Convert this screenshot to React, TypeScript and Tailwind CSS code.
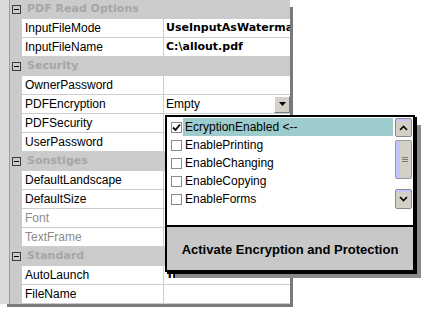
import React from 'react';

type Row =
  | { group: string }
  | { name: string; value?: string; bold?: boolean; dim?: boolean; combo?: boolean };

const rows: Row[] = [
  { group: 'PDF Read Options' },
  { name: 'InputFileMode', value: 'UseInputAsWatermark', bold: true },
  { name: 'InputFileName', value: 'C:\\allout.pdf', bold: true },
  { group: 'Security' },
  { name: 'OwnerPassword' },
  { name: 'PDFEncryption', value: 'Empty', combo: true },
  { name: 'PDFSecurity' },
  { name: 'UserPassword' },
  { group: 'Sonstiges' },
  { name: 'DefaultLandscape' },
  { name: 'DefaultSize' },
  { name: 'Font', dim: true },
  { name: 'TextFrame', dim: true },
  { group: 'Standard' },
  { name: 'AutoLaunch', value: 'True', bold: true },
  { name: 'FileName' },
];

const options = ['EcryptionEnabled <--', 'EnablePrinting', 'EnableChanging', 'EnableCopying', 'EnableForms'];

// wide bold face, close to the old Tahoma Bold of the original
const boldFont = "font-['DejaVu_Sans',sans-serif] font-bold text-[11px]";

const Minus = () => (
  <div className="w-[9px] h-[9px] border border-[#3c3c3c] flex items-center justify-center">
    <div className="w-[5px] h-px bg-black" />
  </div>
);

const ComboButton = () => (
  <div className="shrink-0 w-[16px] h-[17px] bg-[#d4d0c8] border-t border-l border-white border-r border-b border-r-[#7a7a7a] border-b-[#7a7a7a] flex items-center justify-center">
    <svg width="7" height="4" viewBox="0 0 7 4">
      <path d="M0 0h7L3.5 4z" fill="#000" />
    </svg>
  </div>
);

const ScrollButton = ({ up }: { up?: boolean }) => (
  <div className="h-full w-full rounded-[2px] border border-[#8a8a8a] bg-[#d4d0c8] shadow-[inset_0_2px_0_#c6c6ff] flex items-center justify-center">
    <svg width="9" height="6" viewBox="0 0 9 6">
      <path d={up ? 'M1 5l3.5-3.5L8 5' : 'M1 1l3.5 3.5L8 1'} stroke="#000" strokeWidth="1.6" fill="none" />
    </svg>
  </div>
);

const Grid = () => (
  <div className="flex w-[290px] h-[304px] bg-[#cbcbcb] shadow-[5px_5px_0_-2px_#7a7a7a]">
    <div className="shrink-0 w-[9px] bg-[#d9d9d9]" />
    <div className="shrink-0 w-px bg-[#9c9c9c]" />
    <div className="flex-1 min-w-0 flex flex-col">
      {rows.map((r, i) =>
        'group' in r ? (
          <div key={i} className="h-[19px] flex items-center bg-[#cbcbcb]">
            <div className="shrink-0 w-[12px] pl-[2px]">
              <Minus />
            </div>
            <span className={`pl-[5px] text-[#a6a6a6] ${boldFont}`}>{r.group}</span>
          </div>
        ) : (
          <div key={i} className="h-[19px] flex">
            <div className="shrink-0 w-[12px] bg-[#cbcbcb]" />
            <div
              className={`shrink-0 w-[141px] bg-white border-b border-[#cdcdcd] pl-[3px] leading-[18px] whitespace-nowrap ${
                r.dim ? 'text-[#8c8c8c]' : 'text-black'
              }`}
            >
              {r.name}
            </div>
            <div className="shrink-0 w-px bg-[#cdcdcd]" />
            <div className="flex-1 min-w-0 flex items-center bg-white border-b border-[#cdcdcd] pl-[2px] overflow-hidden whitespace-nowrap">
              <span className={`flex-1 min-w-0 leading-[18px] overflow-hidden ${r.bold ? boldFont : ''}`}>{r.value}</span>
              {r.combo && <ComboButton />}
            </div>
          </div>
        )
      )}
    </div>
  </div>
);

const Popup = () => (
  <div className="absolute left-[165px] top-[115px] w-[250px] border-2 border-black bg-white flex flex-col shadow-[2px_2px_0_0_#000,8px_8px_0_-2px_#8a8a8a]">
    <div className="h-[108px] flex">
      <div className="w-[226px] pt-px flex flex-col">
        {options.map((o, i) => (
          <div key={o} className="h-[18px] flex items-center">
            <div className="ml-[4px] w-[11px] h-[11px] border border-[#8a8a8a] bg-white flex items-center justify-center">
              {i === 0 && (
                <svg width="9" height="9" viewBox="0 0 9 9">
                  <path d="M1 4.5l2.5 2.5L8 1.5" stroke="#000" strokeWidth="1.8" fill="none" />
                </svg>
              )}
            </div>
            <div className={`ml-px flex-1 h-full pl-[2px] leading-[18px] ${i === 0 ? 'bg-[#9ecccc]' : ''}`}>{o}</div>
          </div>
        ))}
      </div>
      <div className="ml-[2px] w-[17px] mt-px h-[91px] flex flex-col">
        <div className="h-[19px]">
          <ScrollButton up />
        </div>
        <div className="h-[3px]" />
        <div className="h-[39px] rounded-[2px] border border-[#9a9a9a] bg-[#d4d0c8] shadow-[inset_4px_0_0_#c4c4ff] flex flex-col items-center justify-center gap-px pl-[3px]">
          <div className="w-[6px] h-px bg-[#7a7a7a]" />
          <div className="w-[6px] h-px bg-[#7a7a7a]" />
          <div className="w-[6px] h-px bg-[#7a7a7a]" />
        </div>
        <div className="h-[10px]" />
        <div className="h-[20px]">
          <ScrollButton />
        </div>
      </div>
    </div>
    <div className="h-[2px] bg-black" />
    <div className="h-[43px] bg-[#c8c8c8] flex items-center justify-center pt-[3px] font-bold text-[13px] text-black">
      Activate Encryption and Protection
    </div>
  </div>
);

export default function App() {
  return (
    <div className="relative w-[427px] h-[316px] bg-white overflow-hidden text-[12px] text-black font-['Liberation_Sans',Arial,sans-serif]">
      <Grid />
      <Popup />
    </div>
  );
}
